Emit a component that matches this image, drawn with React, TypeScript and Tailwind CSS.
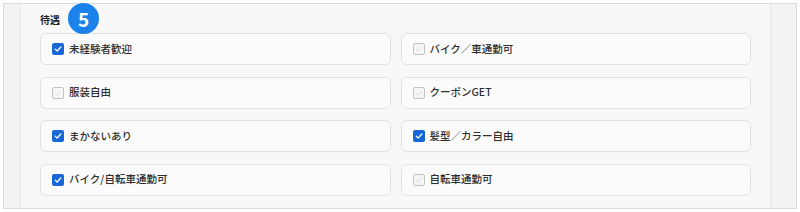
const items: { label: string; checked: boolean }[] = [
  { label: "未経験者歓迎", checked: true },
  { label: "バイク／車通勤可", checked: false },
  { label: "服装自由", checked: false },
  { label: "クーポンGET", checked: false },
  { label: "まかないあり", checked: true },
  { label: "髪型／カラー自由", checked: true },
  { label: "バイク/自転車通勤可", checked: true },
  { label: "自転車通勤可", checked: false },
];

function Check({ checked }: { checked: boolean }) {
  return (
    <span
      className={
        checked
          ? "flex h-[12px] w-[12px] items-center justify-center rounded-[2px] bg-[#1767d6]"
          : "flex h-[12px] w-[12px] items-center justify-center rounded-[2px] border border-[#c2c2c2] bg-[#f6f6f6]"
      }
    >
      <svg viewBox="0 0 12 12" className="h-[10px] w-[10px]" fill="none">
        <path
          d="M2.6 6.2 L4.9 8.4 L9.4 3.6"
          stroke={checked ? "#ffffff" : "#d9d9d9"}
          strokeWidth={checked ? 1.5 : 1}
          strokeLinecap="round"
          strokeLinejoin="round"
        />
      </svg>
    </span>
  );
}

export default function App() {
  return (
    <div
      className="relative h-[212px] w-[800px] bg-white px-[3px] pt-[3px] text-[#2e2e2e]"
      style={{ fontFamily: '"Noto Sans CJK JP", "Noto Sans", sans-serif' }}
    >
      <div className="flex h-[206px] border border-[#dadada]">
        <div className="w-[17px] border-r border-[#e9e9e9] bg-[#f3f3f3]" />
        <div className="flex-1 bg-[#f8f8f8] px-[19px]">
          <div className="flex h-[29px] items-end pb-[8px]">
            <span className="text-[10px] font-bold leading-none text-[#222]">待遇</span>
          </div>
          <div className="grid grid-cols-2 gap-x-[10px] gap-y-[11.5px]">
            {items.map((it) => (
              <label
                key={it.label}
                className="flex h-[32px] items-center gap-[5px] rounded-[6px] border border-[#e2e2e2] bg-[#fbfbfb] pl-[11px]"
              >
                <Check checked={it.checked} />
                <span className="text-[10.5px] font-medium leading-none">{it.label}</span>
              </label>
            ))}
          </div>
        </div>
        <div className="w-[26px] border-l border-[#e9e9e9] bg-[#f3f3f3]" />
      </div>
      <div className="absolute left-[68px] top-[3px] flex h-[31px] w-[31px] items-center justify-center rounded-full bg-[#1a82ea] pb-[1px] text-[19px] font-bold leading-none text-white">
        5
      </div>
    </div>
  );
}
